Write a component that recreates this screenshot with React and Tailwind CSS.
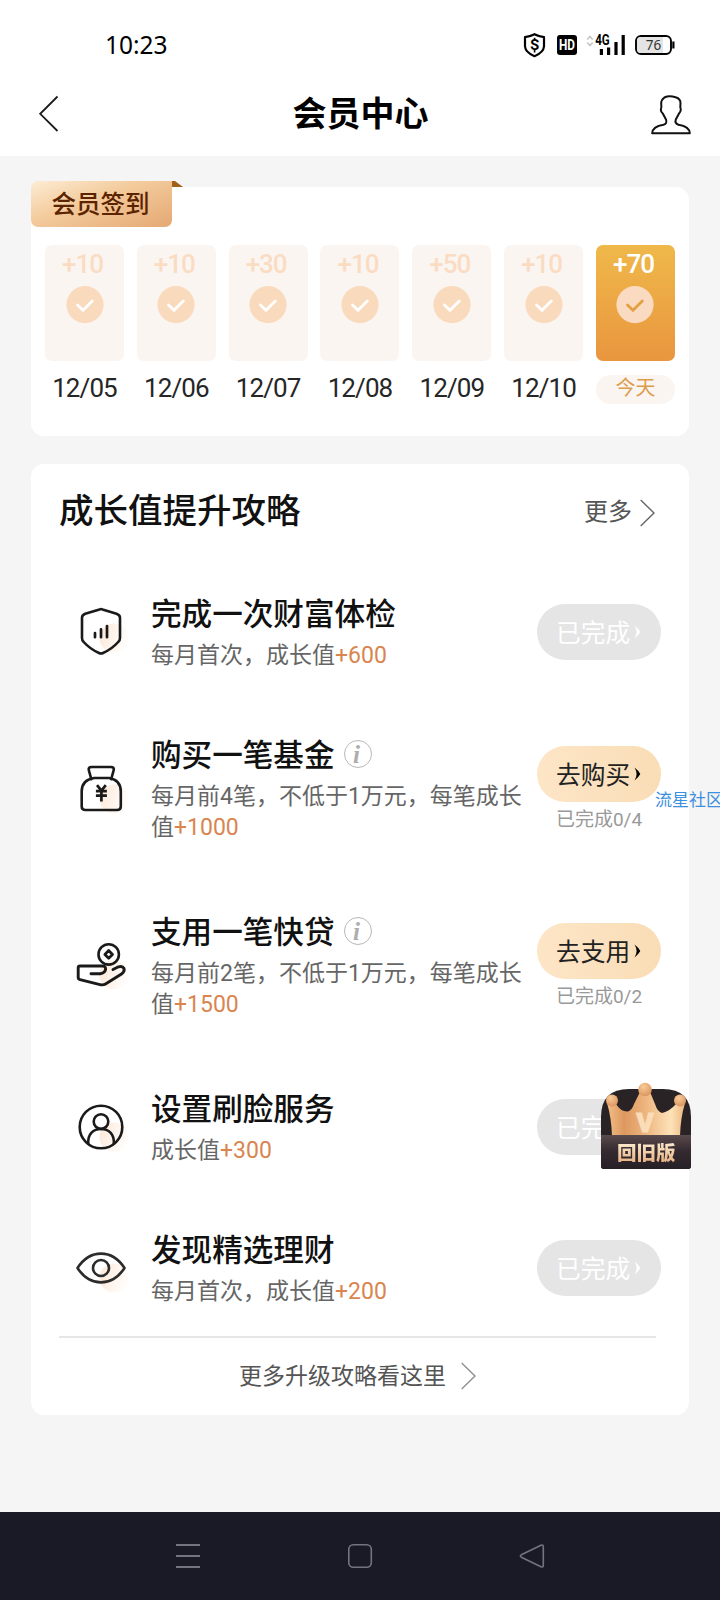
import clsx from 'clsx';

const DAYS = [
  { points: '+10', label: '12/05' },
  { points: '+10', label: '12/06' },
  { points: '+30', label: '12/07' },
  { points: '+10', label: '12/08' },
  { points: '+50', label: '12/09' },
  { points: '+10', label: '12/10' },
  { points: '+70', label: '今天', today: true },
];

const TASKS = [
  { icon: ShieldIcon, title: '完成一次财富体检', desc: '每月首次，成长值', points: '+600', done: true, height: 'h-[141px]', iconTop: 'mt-[10px]' },
  { icon: BagIcon, title: '购买一笔基金', info: true, desc: '每月前4笔，不低于1万元，每笔成长值', points: '+1000', action: '去购买', progress: '已完成0/4', height: 'h-[177px]', iconTop: 'mt-[30px]' },
  { icon: HandIcon, title: '支用一笔快贷', info: true, desc: '每月前2笔，不低于1万元，每笔成长值', points: '+1500', action: '去支用', progress: '已完成0/2', height: 'h-[177px]', iconTop: 'mt-[29px]' },
  { icon: FaceIcon, title: '设置刷脸服务', desc: '成长值', points: '+300', done: true, height: 'h-[141px]', iconTop: 'mt-[14px]' },
  { icon: EyeIcon, title: '发现精选理财', desc: '每月首次，成长值', points: '+200', done: true, height: 'h-[109px]', iconTop: 'mt-[14px]' },
];

function IconBase({ id, children }) {
  return (
    <svg viewBox="0 0 60 60" className="h-[60px] w-[60px]" fill="none" stroke="#1a1a1a" strokeWidth="2.6" strokeLinecap="round" strokeLinejoin="round">
      <defs>
        <linearGradient id={id} x1="0" y1="0" x2="1" y2="0.3">
          <stop offset="0" stopColor="#fde4d1" />
          <stop offset="1" stopColor="#fffaf6" stopOpacity="0.6" />
        </linearGradient>
      </defs>
      <circle cx="43" cy="37" r="14.5" fill={`url(#${id})`} stroke="none" />
      {children}
    </svg>
  );
}

function ShieldIcon() {
  return (
    <IconBase id="glow-shield">
      <path d="M28.5 8.4Q30 7.8 31.5 8.4L45.5 12.8Q49 14 49 16.8V37Q49 39.5 47.2 41Q41 48 32 52Q30 53 28 52Q19 48 12.7 41Q11 39.5 11 37V16.8Q11 14 14.2 12.8Z" />
      <path d="M24 32V36.2M30 28.4V36.2M36 25V36.2" strokeWidth="2.7" />
    </IconBase>
  );
}

function BagIcon() {
  return (
    <IconBase id="glow-bag">
      <path d="M20.3 17.2L17.8 8.2Q17 5 20.5 5H40Q43.5 5 42.7 8.2L40.2 17.2" />
      <path d="M23 16H38Q49.8 18 49.8 29.5V44.5Q49.8 48 46 48H14.5Q10.7 48 10.7 44.5V29.5Q10.7 18 23 16Z" />
      <path d="M26 23.2L30.4 28.6L34.8 23.2M24.9 29.2H35.9M24.9 33.6H35.9M30.4 28.6V39.6" strokeWidth="2.7" strokeLinecap="butt" />
    </IconBase>
  );
}

function HandIcon() {
  return (
    <IconBase id="glow-hand">
      <circle cx="37.7" cy="16.4" r="10.2" />
      <path d="M37.7 12.6L41.5 16.4L37.7 20.2L33.9 16.4Z" strokeWidth="2.8" />
      <path d="M20 35.7H29Q34 35 34.6 31.2Q34.7 28 31.5 28H9Q7.2 28 7.2 29.8V39.5Q7.2 41.2 9 41.6L30 46.8Q32.5 47.2 34.5 46L50.5 36Q54 33.5 53 30.5Q51.5 27.5 47.5 28.8L42 31.5" strokeWidth="2.9" />
    </IconBase>
  );
}

function FaceIcon() {
  return (
    <IconBase id="glow-face">
      <circle cx="30" cy="27" r="21.3" />
      <circle cx="30" cy="21.6" r="7.3" />
      <path d="M17.3 43.8C16.5 34 22.5 29 30 29C37.5 29 43.5 34 42.8 43.8" />
    </IconBase>
  );
}

function EyeIcon() {
  return (
    <IconBase id="glow-eye">
      <path d="M6.5 27C19 7.8 41 7.8 53.5 27C41 46.2 19 46.2 6.5 27Z" stroke="#2c2c2c" />
      <circle cx="30" cy="27" r="8" stroke="#2c2c2c" />
    </IconBase>
  );
}

function StatusBar() {
  return (
    <div className="flex h-[72px] items-end justify-between pr-[44px] pl-[105px]">
      <span className="mb-[10px] font-['Noto_Sans'] text-[24.5px] leading-[34px] text-black">10:23</span>
      <svg viewBox="0 0 154 28" className="mb-[13px] h-[28px] w-[154px]">
        <path d="M12.5 3.2Q17 5.6 22 6.2V15.5Q21.5 21.5 12.5 25.2Q3.5 21.5 3 15.5V6.2Q8 5.6 12.5 3.2Z" fill="none" stroke="#000" strokeWidth="2.2" strokeLinejoin="round" />
        <text x="12.6" y="19.3" textAnchor="middle" fontSize="14.5" fontWeight="700" fontFamily="Roboto, sans-serif">S</text>
        <path d="M12.6 6.8V9.5M12.6 18.8V21.5" stroke="#000" strokeWidth="1.6" />
        <rect x="35" y="4" width="20" height="20" rx="3" />
        <text x="45" y="19" textAnchor="middle" fontSize="14.5" fontWeight="700" fill="#fff" textLength="16" lengthAdjust="spacingAndGlyphs" fontFamily="Roboto, sans-serif">HD</text>
        <path d="M65.3 8.5L68 5.5L70.7 8.5M65.3 11.5L68 14.5L70.7 11.5" fill="none" stroke="#c4c4c4" strokeWidth="1.6" />
        <text x="73.2" y="14" fontSize="14" fontWeight="700" textLength="14.5" lengthAdjust="spacingAndGlyphs" fontFamily="Roboto, sans-serif">4G</text>
        <path d="M79.4 24V18M86.6 24V16.5M94 24V11M101.2 24V4" stroke="#000" strokeWidth="3.2" />
        <rect x="114" y="5" width="35" height="18" rx="5" fill="#fff" stroke="#000" strokeWidth="1.9" />
        <path d="M119 6H141V22H119Q115 22 115 18V10Q115 6 119 6Z" fill="#e4e4e4" />
        <rect x="150.3" y="10.5" width="2.2" height="7" fill="#000" />
        <text x="131.5" y="19" textAnchor="middle" fontSize="13.5" fill="#333" fontFamily="'Noto Sans', sans-serif">76</text>
      </svg>
    </div>
  );
}

function Header() {
  return (
    <div className="flex h-[84px] items-center justify-between pr-[27px] pl-[38px]">
      <svg viewBox="0 0 40 38" className="h-[38px] w-[40px]" fill="none" stroke="#1a1a1a" strokeWidth="1.8">
        <path d="M19.5 1.5L2.2 18.8L19.5 36" />
      </svg>
      <h1 className="mr-[8px] text-[34px] leading-[50px] font-bold text-black">会员中心</h1>
      <svg viewBox="0 0 42 42" className="mt-[2px] h-[42px] w-[42px]" fill="none" stroke="#111" strokeWidth="2" strokeLinejoin="round">
        <path d="M13.4 3.5Q18 1.2 24.5 3.2Q29.8 4.8 29.5 9.2Q29 13 29.8 15.8Q29.5 18 28 19.5L24.8 25.5Q23.5 29.5 27.5 30.8Q38.5 32.5 38.8 39.3H1.2Q1.5 32.5 12.5 30.8Q16.5 29.5 15 25.5L11.8 19.5Q10 18 9.8 15.8Q10.8 14 10.2 9.5Q10 6 13.4 3.5Z" />
      </svg>
    </div>
  );
}

function DayTile({ points, label, today }) {
  return (
    <div className="flex w-[79px] flex-col items-center">
      <div
        className={clsx(
          'flex h-[116px] w-full flex-col items-center rounded-[7px]',
          today ? 'bg-linear-to-b from-[#efb84a] to-[#e9963f] text-white' : 'bg-[#fbf5f2] text-[#fadcc2]'
        )}
      >
        <span className="mt-[4px] mr-[4px] text-[26px] leading-[30px] font-medium tracking-[-1px]">{points}</span>
        <svg viewBox="0 0 38 38" className="mt-[7px] h-[38px] w-[38px]" fill="none">
          <circle cx="19" cy="18.6" r="18.6" fill={today ? '#fadbc2' : '#fadabd'} />
          <path d="M11.5 19L17 24.3L26.3 15" stroke={today ? '#e2a042' : '#fff'} strokeWidth="2.8" strokeLinecap="round" />
        </svg>
      </div>
      {today ? (
        <span className="mt-[14px] h-[29px] w-full rounded-full bg-[#fbf5f2] text-center text-[20px] leading-[27px] text-[#dd9c4c]">{label}</span>
      ) : (
        <span className="mt-[12px] text-[26px] leading-[30px] tracking-[-0.9px] text-[#262626]">{label}</span>
      )}
    </div>
  );
}

function CheckInCard() {
  return (
    <section className="relative mx-[31px] h-[249px] rounded-[13px] bg-white px-[14px] pt-[58px]">
      <div className="absolute -top-[6px] left-0 flex items-start">
        <div className="h-[46px] w-[141px] rounded-[7px] rounded-tr-none bg-[linear-gradient(160deg,#fdecd4_0%,#f3cb9c_42%,#e5a873_100%)] pr-[2px] text-center text-[24.5px] leading-[47px] font-medium text-[#5c2300]">
          会员签到
        </div>
        <svg viewBox="0 0 11 6" className="h-[6px] w-[11px]">
          <path d="M0 0H3L11 6H0Z" fill="#a0601c" />
        </svg>
      </div>
      <div className="flex justify-between">
        {DAYS.map((day) => (
          <DayTile key={day.label} {...day} />
        ))}
      </div>
    </section>
  );
}

function ActionPill({ done, action, progress }) {
  return (
    <div className="flex w-[124px] flex-col items-center">
      <button
        className={clsx(
          'flex h-[56px] w-full items-center rounded-full pt-[3px] pl-[19px] text-[24.7px] leading-[36px]',
          done ? 'bg-[#e5e5e5] text-white' : 'bg-linear-to-r from-[#fde5c6] to-[#f9ddb6] text-[#222]'
        )}
      >
        {done ? '已完成' : action}
        <svg viewBox="0 0 7 14" className="mb-[3px] ml-[4px] h-[14px] w-[7px]" fill={done ? '#fff' : '#000'}>
          <path d="M0.5 0.5Q4.5 3.5 6.3 7Q4.5 10.5 0.5 13.5Q2.6 10 2.6 7Q2.6 4 0.5 0.5Z" />
        </svg>
      </button>
      {progress && <span className="mt-[2px] text-[19px] leading-[32px] text-[#999]">{progress}</span>}
    </div>
  );
}

function TaskRow({ task }) {
  const Icon = task.icon;
  return (
    <div className={clsx('flex items-start', task.height)}>
      <div className={clsx('ml-[12px] w-[80px]', task.iconTop)}>
        <Icon />
      </div>
      <div className="w-[375px]">
        <div className="flex h-[50px] items-start">
          <h3 className="text-[30.6px] leading-[47px] font-medium text-[#111]">{task.title}</h3>
          {task.info && (
            <span className="mt-[8px] ml-[9px] flex h-[28px] w-[28px] items-center justify-center rounded-full border-[1.5px] border-[#b8b8b8] pr-[2px] font-['Liberation_Serif'] text-[25px] leading-none font-bold text-[#adadad] italic">
              i
            </span>
          )}
        </div>
        <p className="text-[23px] leading-[30.5px] text-[#666]">
          {task.desc}
          <span className="text-[#d98550]">{task.points}</span>
        </p>
      </div>
      <div className={clsx('ml-[11px]', task.info ? 'mt-[14px]' : 'mt-[13px]')}>
        <ActionPill {...task} />
      </div>
    </div>
  );
}

function TaskCard() {
  return (
    <section className="mx-[31px] mt-[28px] h-[951px] rounded-[13px] bg-white pr-[27px] pl-[28px]">
      <div className="flex h-[127px] items-start justify-between pt-[22px] pr-[7px]">
        <h2 className="text-[34.5px] leading-[50px] font-medium text-[#111]">成长值提升攻略</h2>
        <div className="flex items-center text-[24px] leading-[53px] text-[#555]">
          更多
          <svg viewBox="0 0 15 28" className="ml-[8px] h-[28px] w-[15px]" fill="none" stroke="#666" strokeWidth="1.4">
            <path d="M0.7 1L14 14L0.7 27" />
          </svg>
        </div>
      </div>
      {TASKS.map((task) => (
        <TaskRow key={task.title} task={task} />
      ))}
      <div className="mr-[6px] h-[2px] bg-[#e6e6e6]" />
      <div className="flex h-[76px] items-center justify-center pr-[6px] text-[23px] text-[#555]">
        <span className="pt-[2px]">更多升级攻略看这里</span>
        <svg viewBox="0 0 15 28" className="ml-[15px] h-[28px] w-[15px]" fill="none" stroke="#909090" strokeWidth="1.4">
          <path d="M0.7 1L14 14L0.7 27" />
        </svg>
      </div>
    </section>
  );
}

function OldVersionBadge() {
  return (
    <div className="absolute top-[1082px] left-[601px] h-[87px] w-[90px]">
      <svg viewBox="0 0 90 87" className="h-[87px] w-[90px]">
        <defs>
          <linearGradient id="crown" x1="0" y1="0" x2="1" y2="0">
            <stop offset="0" stopColor="#f3bd88" />
            <stop offset="0.22" stopColor="#dd985f" />
            <stop offset="0.5" stopColor="#eeb680" />
            <stop offset="0.82" stopColor="#fde2b8" />
            <stop offset="1" stopColor="#eeb880" />
          </linearGradient>
          <linearGradient id="band" x1="0" y1="0" x2="0" y2="1">
            <stop offset="0" stopColor="#5a4b4d" />
            <stop offset="0.45" stopColor="#352b30" />
            <stop offset="1" stopColor="#262026" />
          </linearGradient>
          <radialGradient id="ball" cx="0.4" cy="0.3" r="0.7">
            <stop offset="0" stopColor="#f9cb98" />
            <stop offset="1" stopColor="#dc965f" />
          </radialGradient>
        </defs>
        <path d="M0 35Q0 7 28 7H62Q90 7 90 35V84Q90 87 87 87H3Q0 87 0 84Z" fill="#2a2325" />
        <path d="M6 21Q9 25 15 22Q20 30 27 29.5Q31 28 33 22L38.5 11H49.5L54 22Q56.5 30 61 31Q69 29 75 22Q80 25 84 21Q79.5 36 79 54H11Q10.5 36 6 21Z" fill="url(#crown)" />
        <circle cx="11" cy="18.5" r="6" fill="url(#ball)" />
        <circle cx="79" cy="18.5" r="6" fill="url(#ball)" />
        <circle cx="44" cy="7.5" r="6.8" fill="url(#ball)" />
        <text x="44" y="50" textAnchor="middle" fontSize="26" fontWeight="900" fill="#fbdcb8" stroke="#fbdcb8" strokeWidth="1.2" fontFamily="Roboto, sans-serif">V</text>
        <path d="M0 53H90V84Q90 87 87 87H3Q0 87 0 84Z" fill="url(#band)" />
      </svg>
      <span className="absolute top-[58px] left-[16px] bg-linear-to-b from-[#fff1d8] to-[#e0a26c] bg-clip-text text-[19.5px] leading-[28px] font-black whitespace-nowrap text-transparent">
        回旧版
      </span>
    </div>
  );
}

function NavBar() {
  return (
    <nav className="flex h-[88px] items-center justify-between bg-[#1a1926] px-[174px]">
      <svg viewBox="0 0 28 28" className="h-[28px] w-[28px]" stroke="#74737e" strokeWidth="1.8">
        <path d="M2 3H26M2 14H26M2 25H26" />
      </svg>
      <svg viewBox="0 0 28 28" className="h-[28px] w-[28px]" fill="none" stroke="#74737e" strokeWidth="1.6">
        <rect x="2.8" y="2.8" width="22.5" height="22.5" rx="4.5" />
      </svg>
      <svg viewBox="0 0 28 28" className="h-[28px] w-[28px]" fill="none" stroke="#74737e" strokeWidth="1.6" strokeLinejoin="round">
        <path d="M23 3.3Q25.3 2.3 25.3 4.8V23.2Q25.3 25.7 23 24.7L3.3 15.2Q1.5 14 3.3 12.8Z" />
      </svg>
    </nav>
  );
}

export default function App() {
  return (
    <div lang="zh-CN" className="relative flex h-[1600px] w-[720px] flex-col overflow-hidden bg-[#f5f5f5] font-[Roboto,'Noto_Sans_CJK_SC',sans-serif]">
      <header className="bg-white">
        <StatusBar />
        <Header />
      </header>
      <main className="flex-1 pt-[31px]">
        <CheckInCard />
        <TaskCard />
      </main>
      <NavBar />
      <OldVersionBadge />
      <span className="absolute top-[787px] left-[655px] text-[17px] leading-[26px] whitespace-nowrap text-[#3d8fe0]">流星社区</span>
    </div>
  );
}
